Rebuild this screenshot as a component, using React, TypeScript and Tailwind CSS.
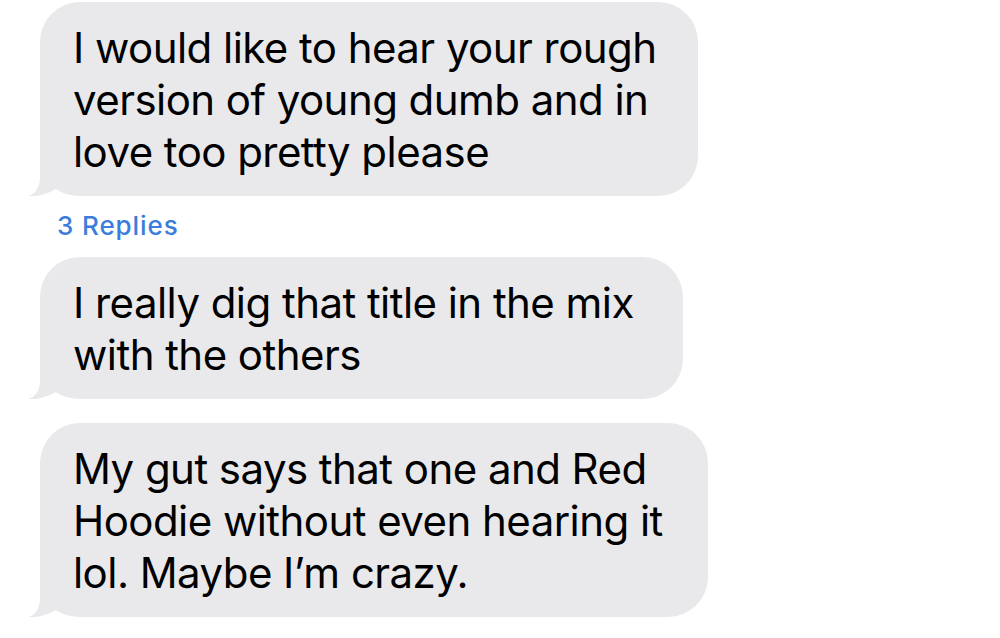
import React from 'react';

// Grey iMessage-style incoming bubbles

const font = { fontFamily: 'Inter, "Helvetica Neue", Arial, sans-serif' };

function Tail() {
  return (
    <svg
      className="absolute -left-[14px] bottom-0 w-[60px] h-[50px]"
      viewBox="-14 -50 60 50"
      aria-hidden
    >
      <path
        d="M0,-50 L0,-18 C0,-8 -6,-1 -12,0 C-5,1 8,-2 16,-7 C23,-2 32,0 46,0 L46,-50 Z"
        fill="#e9e9eb"
      />
    </svg>
  );
}

function Bubble({ lines, width }: { lines: string[]; width: string }) {
  return (
    <div className={`relative ${width}`}>
      <Tail />
      <div className="relative rounded-[40px] bg-[#e9e9eb] pl-[33px] pr-4 pt-[20px] pb-[18px] text-[42px] leading-[52px] text-black tracking-[-0.55px]">
        {lines.map((l, i) => (
          <div key={i} className="whitespace-nowrap">
            {l}
          </div>
        ))}
      </div>
    </div>
  );
}

export default function App() {
  return (
    <div className="w-[1000px] h-[638px] bg-white overflow-hidden pl-10 pt-[2px]" style={font}>
      <Bubble
        width="w-[658px]"
        lines={['I would like to hear your rough', 'version of young dumb and in', 'love too pretty please']}
      />
      <div className="mt-[15px] mb-[16px] pl-[17px] text-[26px] leading-[30px] font-medium tracking-[0.9px] text-[#3b7ddd]">
        3 Replies
      </div>
      <Bubble width="w-[643px]" lines={['I really dig that title in the mix', 'with the others']} />
      <div className="h-6" />
      <Bubble
        width="w-[668px]"
        lines={['My gut says that one and Red', 'Hoodie without even hearing it', 'lol. Maybe I\u2019m crazy.']}
      />
    </div>
  );
}
